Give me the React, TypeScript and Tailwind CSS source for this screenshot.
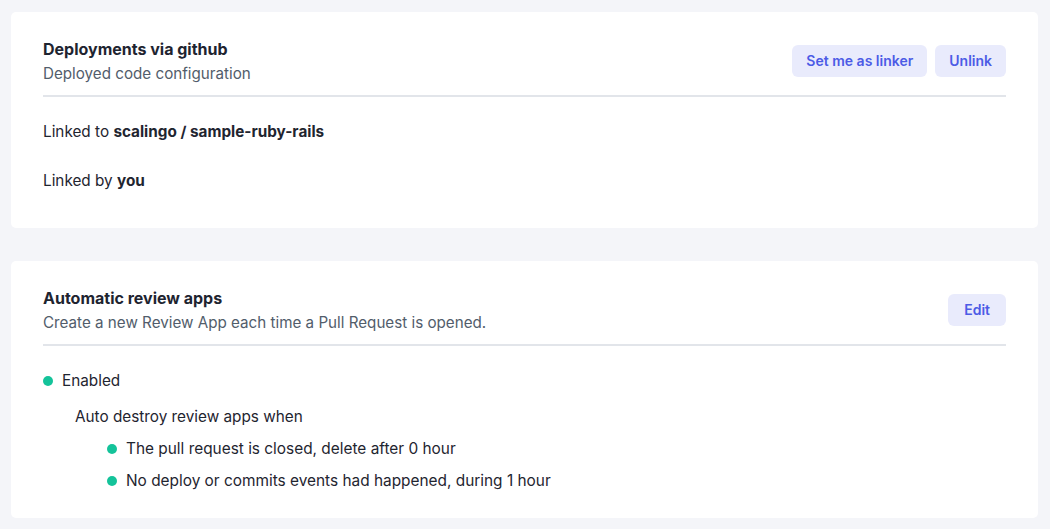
import React from "react";

const font = { fontFamily: "Inter, 'Noto Sans', sans-serif" };

function Btn({ children, wide }: { children: React.ReactNode; wide?: boolean }) {
  return (
    <button
      className={
        (wide ? "px-[16px] " : "px-[14px] ") +
        "h-8 rounded-[6px] bg-[#e9ebfc] text-[#4c5be6] text-[14px] font-semibold leading-none"
      }
    >
      {children}
    </button>
  );
}

function Dot() {
  return <span className="inline-block w-[10px] h-[10px] rounded-full bg-[#14c39a] mr-[9px] shrink-0" />;
}

export default function App() {
  return (
    <div className="w-[1050px] h-[529px] bg-[#f4f5f9] px-[11px] pt-[12px] text-[#1f2530]" style={font}>
      <div className="w-[1027px] bg-white rounded-[5px] px-[32px] pt-[24px] pb-[35px]">
        <div className="flex items-center justify-between">
          <div>
            <div className="text-[16px] leading-[26px] font-bold text-[#1e2430]">Deployments via github</div>
            <div className="text-[15.2px] leading-[24px] text-[#525d6b]">Deployed code configuration</div>
          </div>
          <div className="flex gap-2">
            <Btn>Set me as linker</Btn>
            <Btn>Unlink</Btn>
          </div>
        </div>
        <div className="mt-[9px] h-[2px] bg-[#e2e5ea]" />
        <div className="mt-[23px] text-[15.3px] leading-[24px]">
          Linked to <span className="font-bold">scalingo / sample-ruby-rails</span>
        </div>
        <div className="mt-[25px] text-[15.3px] leading-[24px]">
          Linked by <span className="font-bold">you</span>
        </div>
      </div>

      <div className="mt-[33px] w-[1027px] bg-white rounded-[5px] px-[32px] pt-[24px] pb-[25px]">
        <div className="flex items-center justify-between">
          <div>
            <div className="text-[16px] leading-[26px] font-bold text-[#1e2430]">Automatic review apps</div>
            <div className="text-[15.2px] leading-[24px] text-[#525d6b]">
              Create a new Review App each time a Pull Request is opened.
            </div>
          </div>
          <Btn wide>Edit</Btn>
        </div>
        <div className="mt-[9px] h-[2px] bg-[#e2e5ea]" />
        <div className="mt-[23px] flex items-center text-[15.3px] leading-[24px]">
          <Dot />
          Enabled
        </div>
        <div className="pl-[32px] mt-[12px] text-[15.3px] leading-[24px]">Auto destroy review apps when</div>
        <div className="pl-[64px] mt-[8px] flex flex-col gap-[8px] text-[15.4px] leading-[24px]">
          <div className="flex items-center">
            <Dot />
            The pull request is closed, delete after 0 hour
          </div>
          <div className="flex items-center">
            <Dot />
            No deploy or commits events had happened, during 1 hour
          </div>
        </div>
      </div>
    </div>
  );
}
